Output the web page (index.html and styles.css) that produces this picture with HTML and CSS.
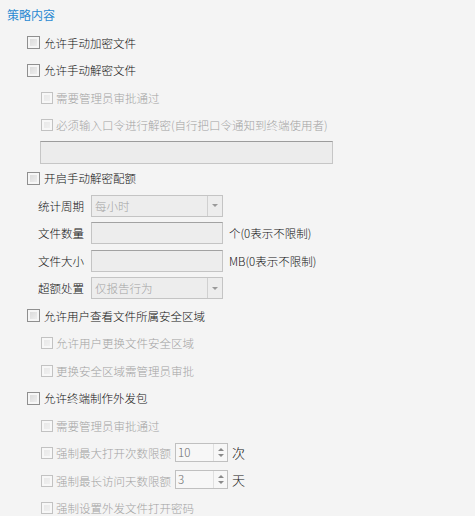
FILE: index.html
```html
<!DOCTYPE html>
<html lang="zh-CN">
<head>
    <meta charset="UTF-8">
    <title>策略内容</title>
    <link rel="stylesheet" href="styles.css">
</head>
<body>
    <div class="panel">
        <div class="title">策略内容</div>

        <!-- Encrypt / decrypt -->
        <div class="row lv1"><span class="cb"></span>允许手动加密文件</div>
        <div class="row lv1"><span class="cb"></span>允许手动解密文件</div>
        <div class="row lv2 off"><span class="cb"></span>需要管理员审批通过</div>
        <div class="row lv2 off"><span class="cb"></span>必须输入口令进行解密(自行把口令通知到终端使用者)</div>
        <div class="field-row"><div class="field"></div></div>

        <!-- Quota -->
        <div class="row lv1"><span class="cb"></span>开启手动解密配额</div>
        <div class="row form">
            <span class="label">统计周期</span>
            <div class="combo"><span class="combo-text">每小时</span><span class="combo-btn"><i class="arrow"></i></span></div>
        </div>
        <div class="row form">
            <span class="label">文件数量</span>
            <div class="input"></div>
            <span class="suffix">个(0表示不限制)</span>
        </div>
        <div class="row form">
            <span class="label">文件大小</span>
            <div class="input"></div>
            <span class="suffix">MB(0表示不限制)</span>
        </div>
        <div class="row form">
            <span class="label">超额处置</span>
            <div class="combo"><span class="combo-text">仅报告行为</span><span class="combo-btn"><i class="arrow"></i></span></div>
        </div>

        <!-- Security zone -->
        <div class="row lv1"><span class="cb"></span>允许用户查看文件所属安全区域</div>
        <div class="row lv2 off"><span class="cb"></span>允许用户更换文件安全区域</div>
        <div class="row lv2 off"><span class="cb"></span>更换安全区域需管理员审批</div>

        <!-- Outgoing package -->
        <div class="row lv1"><span class="cb"></span>允许终端制作外发包</div>
        <div class="row lv2 off"><span class="cb"></span>需要管理员审批通过</div>
        <div class="row lv2 off">
            <span class="cb"></span>强制最大打开次数限额
            <div class="spin"><span class="spin-text">10</span><span class="spin-btn"><i class="up"></i><i class="down"></i></span></div>
            <span class="unit">次</span>
        </div>
        <div class="row lv2 off">
            <span class="cb"></span>强制最长访问天数限额
            <div class="spin"><span class="spin-text">3</span><span class="spin-btn"><i class="up"></i><i class="down"></i></span></div>
            <span class="unit">天</span>
        </div>
        <div class="row lv2 off"><span class="cb"></span>强制设置外发文件打开密码</div>
    </div>
</body>
</html>
```

FILE: styles.css
```css
/* General styles */
body {
    margin: 0;
    padding: 0;
    background-color: #f4f4f4;
    font-family: "Noto Sans CJK SC", "Noto Sans", sans-serif;
    font-size: 11.5px;
    font-weight: 300;
    color: #111;
    overflow: hidden;
}

.panel {
    display: flex;
    flex-direction: column;
}

.title {
    height: 29px;
    display: flex;
    align-items: center;
    padding-left: 7px;
    font-size: 12px;
    font-weight: 400;
    color: #2a8ad2;
}

/* Checkbox rows */
.row {
    height: 27.5px;
    display: flex;
    align-items: center;
    white-space: nowrap;
}

.lv1 {
    padding-left: 27px;
}

.lv2 {
    padding-left: 41px;
}

.cb {
    box-sizing: border-box;
    width: 13px;
    height: 13px;
    margin-right: 4px;
    border: 1px solid #8f8f8f;
    background: linear-gradient(135deg, #d6d6d6, #f3f3f3);
    box-shadow: inset 0 0 0 2px #f6f6f6;
}

.lv2 .cb {
    width: 12px;
    height: 12px;
    margin-right: 3px;
}

.off {
    color: #a3a3a3;
}

.off .cb {
    border-color: #c2c2c2;
    background: linear-gradient(135deg, #e6e6e6, #f2f2f2);
    box-shadow: inset 0 0 0 2px #f7f7f7;
}

/* Password field */
.field-row {
    height: 25.5px;
    padding-left: 40px;
    padding-top: 2px;
    box-sizing: border-box;
}

.field {
    box-sizing: border-box;
    width: 293px;
    height: 23px;
    background-color: #ececec;
    border: 1px solid #c6c6c6;
    border-top-color: #9c9c9c;
}

/* Quota form */
.form {
    padding-left: 38px;
}

.label {
    width: 53px;
}

.combo,
.input {
    box-sizing: border-box;
    width: 132px;
    height: 22px;
    background-color: #ededed;
    border: 1px solid #c4c4c4;
    display: flex;
}

.input {
    border-top-color: #a2a2a2;
}

.combo-text {
    flex: 1;
    padding-left: 3px;
    color: #a3a3a3;
    line-height: 20px;
}

.combo-btn {
    width: 14px;
    border-left: 1px solid #d0d0d0;
    display: flex;
    align-items: center;
    justify-content: center;
}

.arrow {
    width: 0;
    height: 0;
    border-left: 3px solid transparent;
    border-right: 3px solid transparent;
    border-top: 3px solid #9a9a9a;
}

.suffix {
    margin-left: 6px;
}

/* Spin boxes */
.spin {
    box-sizing: border-box;
    width: 53px;
    height: 19px;
    margin-left: 4px;
    margin-top: -2px;
    background-color: #f7f7f7;
    border: 1px solid #c0c0c0;
    display: flex;
}

.spin-text {
    flex: 1;
    padding-left: 2px;
    line-height: 17px;
    color: #6a6a6a;
}

.spin-btn {
    width: 13px;
    display: flex;
    flex-direction: column;
    align-items: center;
    justify-content: center;
    gap: 3px;
    border-left: 1px solid #e0e0e0;
}

.up,
.down {
    width: 0;
    height: 0;
    border-left: 3px solid transparent;
    border-right: 3px solid transparent;
}

.up {
    border-bottom: 3px solid #8a8a8a;
}

.down {
    border-top: 3px solid #8a8a8a;
}

.unit {
    margin-left: 4px;
    margin-top: -2px;
    color: #111;
    font-size: 13px;
}
```
